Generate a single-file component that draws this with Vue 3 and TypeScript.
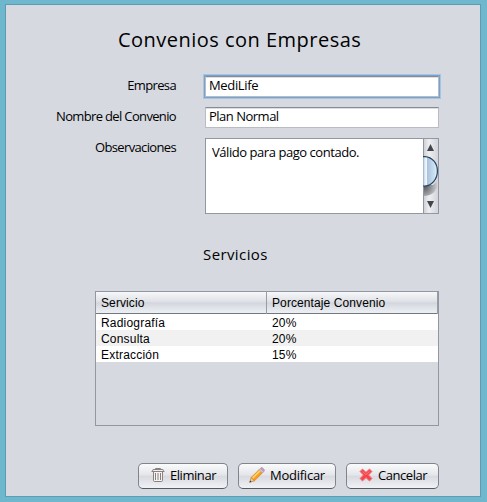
<script setup lang="ts">
import { ref } from 'vue'

interface Service {
  name: string
  percent: number
}

const company = ref('MediLife')
const agreement = ref('Plan Normal')
const notes = ref('Válido para pago contado.')
const services: Service[] = [
  { name: 'Radiografía', percent: 20 },
  { name: 'Consulta', percent: 20 },
  { name: 'Extracción', percent: 15 },
]
</script>

<template>
  <div class="frame">
    <main class="panel">
      <h1 class="title"><span>Convenios con Empresas</span></h1>

      <form class="form" @submit.prevent>
        <label class="l-company" for="company">Empresa</label>
        <input id="company" v-model="company" class="field focused" type="text" />
        <label class="l-agreement" for="agreement">Nombre del Convenio</label>
        <input id="agreement" v-model="agreement" class="field" type="text" />
        <label class="l-notes" for="notes">Observaciones</label>
        <div class="area">
          <textarea id="notes" v-model="notes"></textarea>
          <svg class="scroll" width="15" height="74" viewBox="0 0 15 74" aria-hidden="true">
            <defs>
              <linearGradient id="track"><stop offset="0" stop-color="#c9cbd1" /><stop offset=".4" stop-color="#eeeff1" /><stop offset="1" stop-color="#d2d4da" /></linearGradient>
              <linearGradient id="thumb"><stop offset="0" stop-color="#8fa8c4" /><stop offset=".12" stop-color="#dbe8f3" /><stop offset=".24" stop-color="#f2f8fc" /><stop offset=".3" stop-color="#a9c2de" /><stop offset=".75" stop-color="#c9dff0" /><stop offset="1" stop-color="#e3f1fa" /></linearGradient>
              <radialGradient id="shade" cx="0" cy=".3" r="1"><stop offset="0" stop-color="#4d4f54" /><stop offset="1" stop-color="#c9cbd0" /></radialGradient>
            </defs>
            <rect width="15" height="74" fill="url(#track)" />
            <rect width="1" height="74" fill="#92959d" />
            <path d="M1 46H10L14 42V49Q10 57 1 57Z" fill="url(#shade)" />
            <path d="M0 17.600H2C9 18 14.400 24 14.400 32S9 46.500 2 47H0Z" fill="url(#thumb)" />
            <path d="M0 17.600H2C9 18 14.400 24 14.400 32S9 46.500 2 47H0" fill="none" stroke="#26435f" stroke-width="1.200" />
            <path d="M7.500 5L11 12H4Z" fill="#42454b" />
            <path d="M4 62H11L7.500 69Z" fill="#42454b" />
          </svg>
        </div>
      </form>

      <h2 class="subtitle"><span>Servicios</span></h2>

      <section class="table">
        <div class="row head">
          <div class="cell">Servicio</div>
          <div class="cell">Porcentaje Convenio</div>
        </div>
        <div v-for="service in services" :key="service.name" class="row item">
          <div class="cell">{{ service.name }}</div>
          <div class="cell">{{ service.percent }}%</div>
        </div>
      </section>

      <footer class="actions">
        <button class="delete" type="button">
          <svg width="14" height="16" viewBox="0 0 14 16" fill="none" stroke="#8a817e" aria-hidden="true">
            <path d="M4.500 2.500V1.500H9.500V2.500M1.500 4.500V3.500Q1.500 2.500 3 2.500H11Q12.500 2.500 12.500 3.500V4.500M.5 4.500H13.500" />
            <path d="M2.500 5V13.500Q2.500 14.500 3.500 14.500H10.500Q11.500 14.500 11.500 13.500V5" fill="#f5f3f2" />
            <path d="M4.500 6V13M7 6V13M9.500 6V13" />
          </svg>
          <span>Eliminar</span>
        </button>
        <button class="edit" type="button">
          <svg width="16" height="16" viewBox="0 0 16 16" aria-hidden="true">
            <path d="M.7 15.300L2.200 10.500L5.500 13.800Z" fill="#f1cf9e" stroke="#a36f37" stroke-width=".6" />
            <path d="M.5 15.500L1.200 13.400L2.600 14.800Z" fill="#363636" />
            <path d="M2.200 10.500L10.500 2.200L13.800 5.500L5.500 13.800Z" fill="#f79c1c" stroke="#d67812" stroke-width=".6" />
            <path d="M3 10.700L10.600 3.100L11.700 4.200L4.100 11.800Z" fill="#ffd573" />
            <path d="M10 2.700L11.400 1.300L14.700 4.600L13.300 6Z" fill="#c8ccd3" stroke="#8c94a2" stroke-width=".4" />
            <path d="M11.400 1.300L12 .7Q13 .2 14.300 1.500T15.400 3.900L14.700 4.600Z" fill="#d99cc4" stroke="#ad6b9c" stroke-width=".5" />
          </svg>
          <span>Modificar</span>
        </button>
        <button class="cancel" type="button">
          <svg width="14" height="14" viewBox="0 0 14 14" aria-hidden="true">
            <path d="M3.500 1L7 4.300L10.500 1L13 3.500L9.600 7L13 10.500L10.500 13L7 9.700L3.500 13L1 10.500L4.400 7L1 3.500Z" fill="#f5444a" stroke="#f47a7d" />
            <path d="M3.500 3.400L7 6.700L10.500 3.400" fill="none" stroke="#ff7778" />
          </svg>
          <span>Cancelar</span>
        </button>
      </footer>
    </main>
  </div>
</template>

<style>
body {
  margin: 0;
  background: #6fb7cd;
}
</style>

<style scoped>
* {
  box-sizing: border-box;
}
.frame {
  height: 502px;
  padding: 4px 6px 5px 5px;
  background: #6fb7cd;
  color: #000;
  font: 13px/16px 'Open Sans', 'Noto Sans', sans-serif;
}
.panel {
  display: flex;
  flex-direction: column;
  height: 493px;
  border: 1px solid #5c9db3;
  background: #d6d9e0;
}
.title {
  margin: 20px 0 0 112px;
  font: 400 20px/30px 'Open Sans', 'Noto Sans', sans-serif;
  letter-spacing: 0.48px;
  white-space: nowrap;
}
.form {
  display: grid;
  grid-template-columns: 170px 234px;
  grid-template-rows: 21px 21px 76px;
  column-gap: 29px;
  row-gap: 10px;
  margin-top: 21px;
}
label {
  text-align: right;
  white-space: nowrap;
  letter-spacing: -0.65px;
  line-height: 19px;
}
.field {
  width: 234px;
  height: 21px;
  margin: 0;
  padding: 0 3px 3px;
  border: 1px solid #b9bcc2;
  border-top-color: #898b91;
  border-radius: 0;
  outline: none;
  background: #fff;
  box-shadow: inset 0 1px #dddee1;
  color: #000;
  font: inherit;
  letter-spacing: -0.5px;
}
.focused {
  box-shadow: inset 0 1px #dddee1, 0 0 0 1px #73a4d1, 0 0 0 2px #aac4df;
  letter-spacing: -0.35px;
}
.area {
  display: flex;
  border: 1px solid #9297a1;
  background: #fff;
}
textarea {
  flex: 1;
  min-width: 0;
  height: 74px;
  padding: 5px 6px;
  border: 0;
  outline: 0;
  resize: none;
  overflow: hidden;
  background: #fff;
  color: #000;
  font: inherit;
  letter-spacing: -0.45px;
}
.scroll {
  flex: none;
}
.subtitle {
  margin: 29px 0 0 197px;
  font: 400 15px/22px 'Open Sans', 'Noto Sans', sans-serif;
  letter-spacing: 0.4px;
}
.table {
  width: 344px;
  height: 135px;
  margin: 26px 0 0 89px;
  border: 1px solid #9297a1;
  font: 12px/18px 'Liberation Sans', sans-serif;
  letter-spacing: 0.1px;
}
.row {
  display: grid;
  grid-template-columns: 171px 171px;
  height: 16px;
  background: #fff;
}
.cell {
  height: 100%;
  padding-left: 5px;
}
.item .cell {
  letter-spacing: 0.2px;
}
.head {
  height: 22px;
  border-bottom: 1px solid #727780;
  background: linear-gradient(#f7f8fa, #dfe1e6 45%, #d3d6dc 52%, #edf0f5);
  line-height: 22px;
}
.head .cell {
  border-right: 1px solid #989ca5;
}
.item:nth-child(odd) {
  background: #f1f1f1;
}
.actions {
  display: flex;
  gap: 10px;
  margin: 37px 0 0 132px;
}
button {
  display: flex;
  align-items: center;
  height: 26px;
  padding: 0 0 2px 14px;
  border: 1px solid #80848c;
  border-bottom-color: #555960;
  border-radius: 5px;
  background: linear-gradient(#fafbfc, #e4e6ea 45%, #d8dae0 52%, #f0f2f6);
  color: #000;
  font: inherit;
  letter-spacing: -0.45px;
  white-space: nowrap;
}
button svg {
  flex: none;
  margin-right: 4px;
}
.delete {
  width: 90px;
  padding-left: 12px;
}
.delete svg {
  margin-right: 5px;
}
.edit {
  width: 98px;
  padding-left: 10px;
  letter-spacing: -0.25px;
}
.edit svg {
  margin-right: 5px;
}
.cancel {
  width: 93px;
  padding-left: 12px;
}
.cancel svg {
  margin-right: 5px;
}
</style>
